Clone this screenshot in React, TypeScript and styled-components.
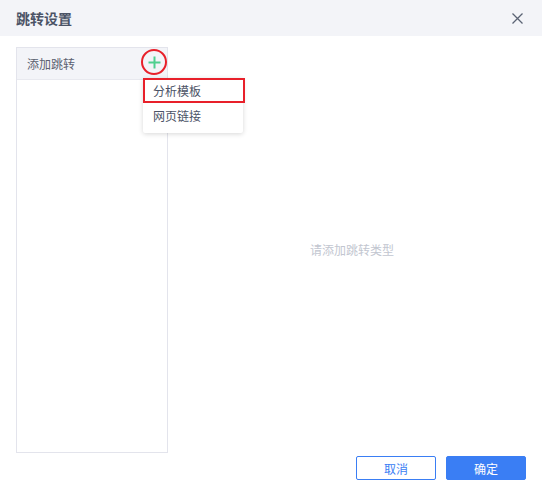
import React from "react";
import styled, { createGlobalStyle } from "styled-components";

const Global = createGlobalStyle`
  html, body { margin: 0; padding: 0; background: #fff; }
  body { font-family: "Noto Sans CJK SC", "Noto Sans", sans-serif; }
`;

const Dialog = styled.div`
  width: 542px;
  height: 492px;
  display: flex;
  flex-direction: column;
  background: #fff;
`;

const Header = styled.div`
  height: 36px;
  flex: none;
  background: #f3f4f8;
  display: flex;
  align-items: center;
  justify-content: space-between;
  padding: 0 16px;
`;

const Title = styled.div`
  font-size: 14px;
  font-weight: 700;
  color: #4b5366;
  line-height: 20px;
`;

const Close = styled.button`
  border: none;
  background: transparent;
  padding: 0;
  width: 14px;
  height: 14px;
  display: flex;
  align-items: center;
  justify-content: center;
  margin-right: 2px;
`;

const Body = styled.div`
  flex: 1;
  display: flex;
  padding: 11px 6px 0 16px;
  min-height: 0;
`;

const Side = styled.div`
  width: 150px;
  height: 404px;
  border: 1px solid #e3e4ec;
  display: flex;
  flex-direction: column;
  position: relative;
`;

const SideHead = styled.div`
  height: 31px;
  background: #f3f4f8;
  display: flex;
  align-items: center;
  justify-content: space-between;
  padding: 0 0 0 10px;
  font-size: 12px;
  color: #5b6170;
  border-bottom: 1px solid #e8e9ef;
`;

const AddBtn = styled.div`
  position: absolute;
  left: 124px;
  top: 1px;
  width: 22px;
  height: 22px;
  border: 2px solid #e8202a;
  border-radius: 50%;
  display: flex;
  align-items: center;
  justify-content: center;
`;

const Menu = styled.div`
  position: absolute;
  left: 126px;
  top: 30px;
  width: 100px;
  background: #fff;
  box-shadow: 0 1px 5px rgba(0, 0, 0, 0.16);
  border-radius: 2px;
  padding: 0 0 5px 0;
  z-index: 2;
`;

const MenuItem = styled.div<{ $marked?: boolean }>`
  height: 25px;
  display: flex;
  align-items: center;
  padding-left: ${(p) => (p.$marked ? "8px" : "10px")};
  font-size: 12px;
  color: #4b5366;
  border: ${(p) => (p.$marked ? "2px solid #e8202a" : "none")};
  margin-right: ${(p) => (p.$marked ? "-2px" : "0")};
  box-sizing: border-box;
`;

const Content = styled.div`
  flex: 1;
  height: 404px;
  display: flex;
  align-items: center;
  justify-content: center;
  font-size: 12px;
  color: #c2c6d0;
  padding-bottom: 4px;
`;

const Footer = styled.div`
  height: 30px;
  flex: none;
  display: flex;
  justify-content: flex-end;
  gap: 10px;
  padding: 0 16px 6px 0;
  align-items: flex-start;
`;

const Btn = styled.button<{ $primary?: boolean }>`
  width: 80px;
  height: 24px;
  box-sizing: border-box;
  border-radius: 2px;
  border: 1px solid #3a7ef4;
  background: ${(p) => (p.$primary ? "#3a7ef4" : "#fff")};
  color: ${(p) => (p.$primary ? "#fff" : "#3a7ef4")};
  font-size: 12px;
  font-family: "Noto Sans CJK SC", "Noto Sans", sans-serif;
  padding: 0;
`;

export default function App() {
  return (
    <>
      <Global />
      <Dialog>
        <Header>
          <Title>跳转设置</Title>
          <Close aria-label="close">
            <svg width="11" height="11" viewBox="0 0 11 11">
              <path d="M0.5 0.5 L10.5 10.5 M10.5 0.5 L0.5 10.5" stroke="#5b6374" strokeWidth="1.3" />
            </svg>
          </Close>
        </Header>
        <Body>
          <Side>
            <SideHead>添加跳转</SideHead>
            <AddBtn>
              <svg width="13" height="13" viewBox="0 0 13 13">
                <path d="M6.5 0.5 V12.5 M0.5 6.5 H12.5" stroke="#4fd08f" strokeWidth="2" />
              </svg>
            </AddBtn>
            <Menu>
              <MenuItem $marked>分析模板</MenuItem>
              <MenuItem>网页链接</MenuItem>
            </Menu>
          </Side>
          <Content>请添加跳转类型</Content>
        </Body>
        <Footer>
          <Btn>取消</Btn>
          <Btn $primary>确定</Btn>
        </Footer>
      </Dialog>
    </>
  );
}
